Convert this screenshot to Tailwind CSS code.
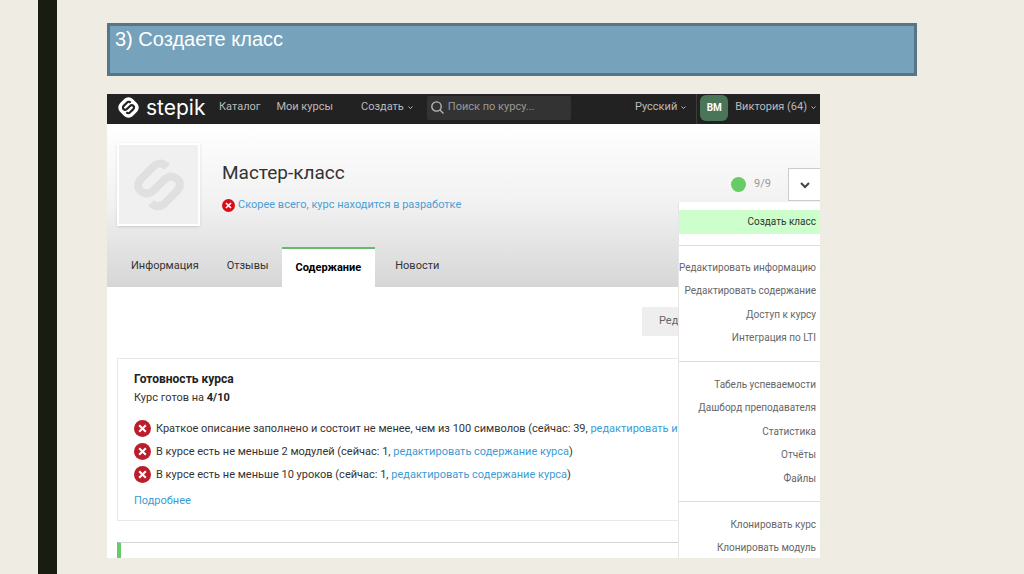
<!DOCTYPE html>
<html lang="ru">
<head>
<meta charset="utf-8">
<meta name="viewport" content="width=device-width, initial-scale=1">
<title>Создаете класс</title>
<script src="https://cdn.jsdelivr.net/npm/@tailwindcss/browser@4"></script>
</head>
<body class="flex h-screen overflow-hidden bg-[#eeece3] pl-[38px] font-['Roboto',sans-serif] text-[11px] text-[#333]">
<svg class="hidden" aria-hidden="true">
  <symbol id="mark" viewBox="0 0 52 52"><path d="M34 8 C29 3 24 4 20 8 L9 19 C4 24 4 29 8 32 C12 36 17 35 21 31 L31 21 C35 17 40 16 44 20 C48 23 48 28 43 33 L32 44 C28 48 23 49 18 44" fill="none" stroke="currentColor" stroke-width="8"/></symbol>
  <symbol id="cross" viewBox="0 0 18 18"><circle cx="9" cy="9" r="9" fill="currentColor"/><path d="M5.5 5.5l7 7m0-7l-7 7" stroke="#fff" stroke-width="2.2"/></symbol>
  <symbol id="chev" viewBox="0 0 10 10"><path d="M1 3l4 4 4-4" fill="none" stroke="currentColor" stroke-width="2"/></symbol>
</svg>
<div class="w-[19px] shrink-0 bg-[#191c10]"></div>
<main class="flex min-w-0 flex-1 flex-col pt-[23px] pb-4 pl-[50px]">
  <h1 class="mr-[107px] h-[53px] shrink-0 border-[3px] border-[#557688] bg-[#77a2bb] px-[5px] text-xl leading-[26px] font-normal text-white font-['Liberation_Sans',sans-serif]">3) Создаете класс</h1>
  <section class="relative mt-[18px] mr-[204px] flex min-h-0 flex-1 flex-col overflow-hidden bg-white">
    <header class="flex h-[30px] shrink-0 items-center bg-[#222] pr-1 pb-[3px] whitespace-nowrap text-[#bbb]">
      <a href="#" class="ml-[10px] flex w-[102px] shrink-0 items-center gap-1.5 text-white">
        <svg class="size-[23px] shrink-0" viewBox="0 0 23 23"><rect x="2.5" y="2.5" width="18" height="18" rx="6" transform="rotate(45 11.5 11.5)" fill="#fff"/><use href="#mark" x="4.5" y="4.5" width="14" height="14" color="#222"/></svg>
        <span class="text-[21px] leading-[26px] font-['Inter',sans-serif]">stepik</span>
      </a>
      <nav class="flex items-center">
        <a href="#" class="mr-4">Каталог</a>
        <a href="#" class="mr-7">Мои курсы</a>
        <button type="button" class="flex items-center gap-1">Создать <svg class="size-[5px]"><use href="#chev"/></svg></button>
      </nav>
      <label class="ml-3.5 flex h-6 w-36 shrink-0 items-center gap-1 rounded-xs bg-[#333] pl-1">
        <svg class="size-[13px] shrink-0" viewBox="0 0 13 13" fill="none" stroke="#bbb" stroke-width="1.3"><circle cx="5.5" cy="5.5" r="4.7"/><path d="M9 9l3.5 3.5"/></svg>
        <input type="search" aria-label="Поиск по курсу" placeholder="Поиск по курсу..." class="w-full min-w-0 outline-none placeholder:text-[#999]">
      </label>
      <button type="button" class="ml-auto flex items-center gap-1">Русский <svg class="size-[5px]"><use href="#chev"/></svg></button>
      <button type="button" class="-mb-[3px] ml-2.5 flex h-[30px] items-center border-l border-[#3c3c3c] pb-[3px] pl-[3px]"><span class="mr-[7px] flex h-[26px] w-7 items-center justify-center rounded-md bg-[#4a7558] text-[10px] font-bold text-white">ВМ</span>Виктория (64) <svg class="ml-1 size-[5px]"><use href="#chev"/></svg></button>
    </header>
    <div class="flex h-[163px] shrink-0 flex-col justify-between bg-linear-to-b from-white via-[#f1f1f1] to-[#d6d6d6]">
      <div class="flex pt-[19px] pl-[10px]">
        <div class="flex size-[83px] items-center justify-center border-2 border-white bg-[#f0f0f0] text-[#e0e0e0] shadow-sm"><svg class="size-[52px]"><use href="#mark"/></svg></div>
        <div class="ml-[22px] pt-[18px]">
          <h2 class="text-[19px] leading-6">Мастер-класс</h2>
          <a href="#" class="mt-[11px] flex items-center gap-[3px] leading-[18px] text-[#4a9fd4]"><svg class="size-[13px] text-[#dd0b16]"><use href="#cross"/></svg>Скорее всего, курс находится в разработке</a>
        </div>
        <div class="mt-[25px] ml-auto flex h-[33px] items-center text-[#999]">
          <span class="mr-2 size-[15px] rounded-full bg-[#66cc66]"></span>9/9
          <button type="button" aria-label="Меню курса" class="ml-[17px] flex h-[33px] w-8 items-center justify-center border border-r-0 border-[#ccc] bg-white text-[#444]"><svg class="size-[10px]"><use href="#chev"/></svg></button>
        </div>
      </div>
      <nav class="flex h-10 items-end text-[#333]">
        <a href="#" class="ml-6 pb-[13px]">Информация</a>
        <a href="#" class="ml-7 pb-[13px]">Отзывы</a>
        <a href="#" class="ml-[13px] flex h-10 items-center border-t-2 border-[#66bb6a] bg-white px-3.5 font-bold text-black">Содержание</a>
        <a href="#" class="ml-5 pb-[13px]">Новости</a>
      </nav>
    </div>
    <button type="button" class="mt-5 mr-[33px] h-[29px] w-[145px] shrink-0 self-end overflow-hidden bg-[#eee] pl-[17px] text-left whitespace-nowrap text-[#666]">Ред</button>
    <article class="mx-[10px] mt-[22px] shrink-0 border border-[#e8e8e8] px-4 pt-[11px] pb-[10px]">
      <h3 class="text-xs leading-[18px] font-bold text-[#222]">Готовность курса</h3>
      <p class="leading-5">Курс готов на <b class="text-[#222]">4/10</b></p>
      <ul class="mt-[9px] leading-[23px] whitespace-nowrap">
        <li class="flex items-center"><svg class="mr-[5px] size-[17px] shrink-0 text-[#bb1e2a]"><use href="#cross"/></svg><span>Краткое описание заполнено и состоит не менее, чем из 100 символов (сейчас: 39, <a href="#" class="text-[#3c9bd4]">редактировать и</a></span></li>
        <li class="flex items-center"><svg class="mr-[5px] size-[17px] shrink-0 text-[#bb1e2a]"><use href="#cross"/></svg><span>В курсе есть не меньше 2 модулей (сейчас: 1, <a href="#" class="text-[#3c9bd4]">редактировать содержание курса</a>)</span></li>
        <li class="flex items-center"><svg class="mr-[5px] size-[17px] shrink-0 text-[#bb1e2a]"><use href="#cross"/></svg><span>В курсе есть не меньше 10 уроков (сейчас: 1, <a href="#" class="text-[#3c9bd4]">редактировать содержание курса</a>)</span></li>
      </ul>
      <a href="#" class="mt-1.5 block leading-[18px] text-[#3c9bd4]">Подробнее</a>
    </article>
    <div class="mx-[10px] mt-[21px] h-10 shrink-0 border-t border-l-4 border-t-[#d5d5d5] border-l-[#66cc66]"></div>
    <div class="absolute top-[108px] right-0 bottom-0 w-[142px] border-l border-[#e5e5e5] bg-white pt-2 text-right text-[10px] text-[#666]">
      <a href="#" class="block bg-[#ccffcc] pr-1 leading-6 text-[#333]">Создать класс</a>
      <hr class="mt-[11px] mb-[10px] border-[#ddd]">
      <a href="#" class="block pr-1 leading-[23px]">Редактировать информацию</a>
      <a href="#" class="block pr-1 leading-[24px]">Редактировать содержание</a>
      <a href="#" class="block pr-1 leading-[23px]">Доступ к курсу</a>
      <a href="#" class="block pr-1 leading-[24px]">Интеграция по LTI</a>
      <hr class="mt-[11px] mb-[11px] border-[#ddd]">
      <a href="#" class="block pr-1 leading-[23px]">Табель успеваемости</a>
      <a href="#" class="block pr-1 leading-[24px]">Дашборд преподавателя</a>
      <a href="#" class="block pr-1 leading-[23px]">Статистика</a>
      <a href="#" class="block pr-1 leading-[24px]">Отчёты</a>
      <a href="#" class="block pr-1 leading-[23px]">Файлы</a>
      <hr class="mt-[11px] mb-[11px] border-[#ddd]">
      <a href="#" class="block pr-1 leading-[23px]">Клонировать курс</a>
      <a href="#" class="block pr-1 leading-[24px]">Клонировать модуль</a>
    </div>
  </section>
</main>
</body>
</html>
